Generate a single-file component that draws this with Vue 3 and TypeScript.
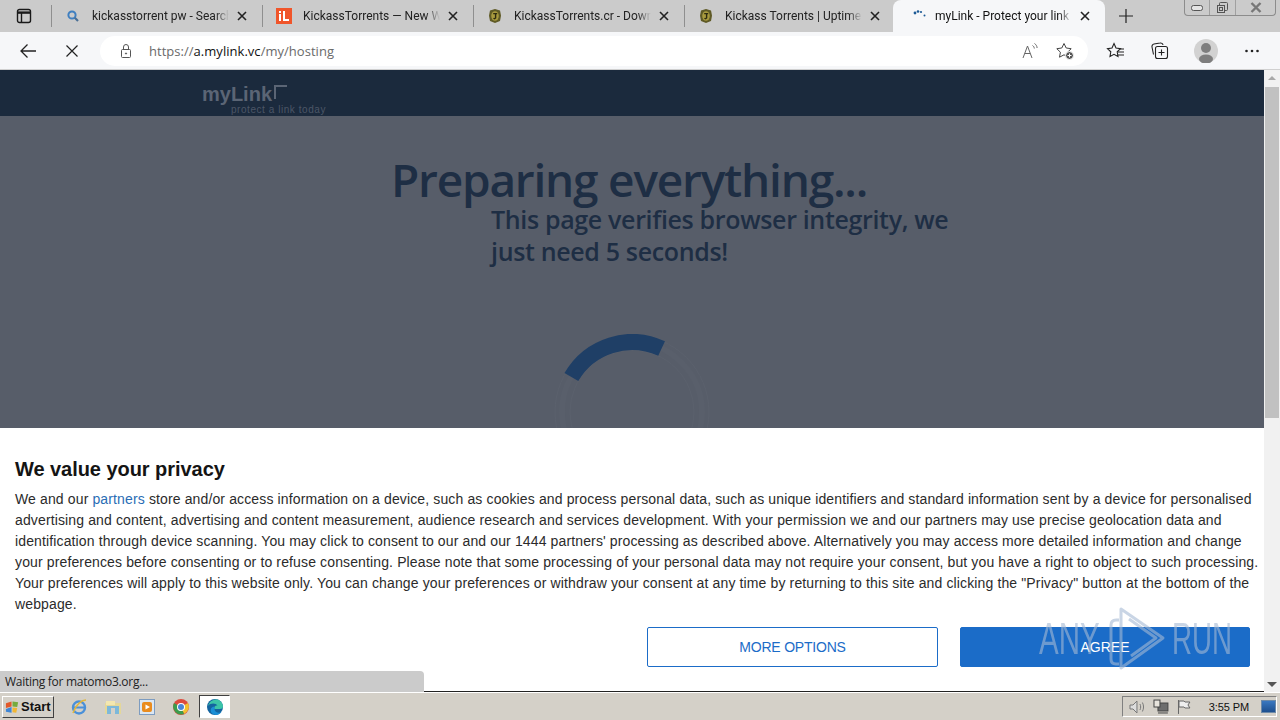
<script setup lang="ts">
interface Tab {
  title: string
  icon: string
}

const tabs: Tab[] = [
  { title: 'kickasstorrent pw - Search', icon: 'search' },
  { title: 'KickassTorrents — New Website', icon: 'il' },
  { title: 'KickassTorrents.cr - Download', icon: 'ka' },
  { title: 'Kickass Torrents | Uptime Status', icon: 'ka' },
]
</script>

<template>
  <div class="screen">
    <div class="tabstrip">
      <div class="tab-btn">
        <svg width="16" height="16" viewBox="0 0 16 16" fill="none" stroke="#1a1a1a" stroke-width="1.4">
          <rect x="1.5" y="1.5" width="13" height="13" rx="2" />
          <path d="M1.5 4.6h13" stroke-width="2.4" />
          <path d="M5.5 5v9" />
        </svg>
      </div>
      <div v-for="t in tabs" :key="t.title" class="tab">
        <span class="fav">
          <svg v-if="t.icon === 'search'" width="14" height="14" viewBox="0 0 14 14" fill="none">
            <circle cx="6" cy="6" r="3.6" stroke="#3f7fc0" stroke-width="2" />
            <path d="M8.8 8.8 12 12" stroke="#4a6f95" stroke-width="2.2" />
          </svg>
          <svg v-else-if="t.icon === 'il'" width="16" height="16" viewBox="0 0 16 16">
            <rect width="16" height="16" fill="#f0552a" />
            <rect x="3" y="6" width="2" height="7" fill="#fff" />
            <rect x="3" y="3" width="2" height="2" fill="#fff" />
            <path d="M7 3h2v8h4v2H7z" fill="#fff" />
          </svg>
          <svg v-else width="16" height="16" viewBox="0 0 16 16">
            <path d="M3 2.5 8 1l5 1.5 1 5-1 5.5-5 2-5-2-1-5.5z" fill="#5f5a26" />
            <ellipse cx="8" cy="8" rx="3.8" ry="4.8" fill="#a89a3e" />
            <path d="M6.2 5h4v1.2H9.3v4L7.6 11.5 6 10.5l1-.8.9.4V6.200H6.200z" fill="#2e2b10" />
          </svg>
        </span>
        <span class="tab-title">{{ t.title }}</span>
        <svg class="tab-x" width="10" height="10" viewBox="0 0 10 10" stroke="#222" stroke-width="1.6">
          <path d="M1 1l8 8M9 1l-8 8" />
        </svg>
      </div>
      <div class="tab active">
        <span class="fav">
          <svg width="16" height="16" viewBox="0 0 16 16" fill="#1c5a96">
            <circle cx="3" cy="5" r="1.4" />
            <circle cx="6" cy="3.500" r="1.300" />
            <circle cx="9" cy="4" r="1.100" />
            <circle cx="12.500" cy="7.500" r="1" />
          </svg>
        </span>
        <span class="tab-title">myLink - Protect your link</span>
        <svg class="tab-x" width="10" height="10" viewBox="0 0 10 10" stroke="#222" stroke-width="1.6">
          <path d="M1 1l8 8M9 1l-8 8" />
        </svg>
      </div>
      <div class="new-tab">
        <svg width="14" height="14" viewBox="0 0 14 14" stroke="#222" stroke-width="1.2">
          <path d="M7 0v14M0 7h14" />
        </svg>
      </div>
      <div class="win-btns">
        <span class="win-btn">
          <svg width="12" height="6" viewBox="0 0 12 6" fill="#e4e4e4" stroke="#555"><rect x=".5" y=".5" width="11" height="5" rx="2" /></svg>
        </span>
        <span class="win-btn mid">
          <svg width="13" height="13" viewBox="0 0 13 13" fill="none" stroke="#555"><rect x="1.500" y="4.500" width="7" height="7" /><path d="M3.500 4.500V2.500a1 1 0 0 1 1-1h6a1 1 0 0 1 1 1v6a1 1 0 0 1-1 1H8.500" /><rect x="3.500" y="6.500" width="3" height="3" /></svg>
        </span>
        <span class="win-btn wide">
          <svg width="12" height="11" viewBox="0 0 12 11" fill="none" stroke="#777" stroke-width="2.400"><path d="M1.500 1l9 9M10.500 1l-9 9" /></svg>
        </span>
      </div>
    </div>

    <div class="toolbar">
      <span class="tool-btn">
        <svg width="18" height="16" viewBox="0 0 18 16" fill="none" stroke="#222" stroke-width="1.3"><path d="M17 8H2M8.500 1.500 2 8l6.500 6.500" /></svg>
      </span>
      <span class="tool-btn">
        <svg width="14" height="14" viewBox="0 0 14 14" fill="none" stroke="#222" stroke-width="1.2"><path d="M1.500 1.500l11 11M12.500 1.500l-11 11" /></svg>
      </span>
      <div class="address">
        <svg class="lock" width="14" height="16" viewBox="0 0 14 16" fill="none" stroke="#555">
          <rect x="2.500" y="6.500" width="9" height="8" rx="1" />
          <path d="M4.500 6.500V4a2.500 2.500 0 0 1 5 0v2.500" />
          <circle cx="7" cy="10.500" r=".6" fill="#555" />
        </svg>
        <span class="url"><span class="dim">https://</span>a.mylink.vc<span class="dim">/my/hosting</span></span>
        <span class="addr-icons">
          <svg width="18" height="18" viewBox="0 0 18 18" fill="none" stroke="#666">
            <path d="M2 16 6.500 4 11 16M3.800 11.500h5.400" />
            <path d="M11.500 3.500c1 .6 1.700 1.600 1.800 3M13.500 1.500c1.500 1 2.500 2.500 2.600 4.500" />
          </svg>
          <svg width="20" height="20" viewBox="0 0 20 20" fill="none" stroke="#444">
            <path d="M9 2.500 11.200 7l5 .7-3.600 3.500.9 5-4.500-2.400-4.500 2.400.9-5L1.800 7.700l5-.7z" />
            <circle cx="14.500" cy="14.500" r="4" fill="#555" stroke="#fff" />
            <path d="M14.500 12.500v4M12.500 14.500h4" stroke="#fff" />
          </svg>
        </span>
      </div>
      <div class="tools">
        <svg width="20" height="18" viewBox="0 0 20 18" fill="none" stroke="#222" stroke-width="1.1">
          <path d="M8 1.500 10 6l4.500.6-3.300 3.200.8 4.700L8 12.300l-4 2.200.8-4.700L1.500 6.600 6 6z" />
          <path d="M13 7h5M12 10h6M12 13h6" />
        </svg>
        <svg width="20" height="20" viewBox="0 0 20 20" fill="none" stroke="#222" stroke-width="1.1">
          <rect x="5.500" y="5.500" width="12" height="12" rx="2" />
          <path d="M11.500 8.500v6M8.500 11.500h6" />
          <path d="M3.500 13.500 2 6a2.500 2.500 0 0 1 2-3l6-1a2.500 2.500 0 0 1 3 2" />
        </svg>
        <svg class="avatar" width="24" height="24" viewBox="0 0 24 24">
          <circle cx="12" cy="12" r="12" fill="#d2d2d2" />
          <circle cx="12" cy="9" r="5" fill="#7e7e7e" />
          <ellipse cx="12" cy="20" rx="7" ry="4.500" fill="#7e7e7e" />
        </svg>
        <svg width="16" height="4" viewBox="0 0 16 4" fill="#222">
          <circle cx="2.500" cy="2" r="1.300" />
          <circle cx="8" cy="2" r="1.300" />
          <circle cx="13.500" cy="2" r="1.300" />
        </svg>
      </div>
    </div>

    <div class="viewport">
      <div class="page">
        <div class="site-head">
          <div class="logo">
            <span class="logo-name">myLink<i class="logo-mark"></i></span>
            <span class="logo-sub">protect a link today</span>
          </div>
        </div>
        <div class="hero">
          <h1>Preparing everything...</h1>
          <p>This page verifies browser integrity, we just need 5 seconds!</p>
          <svg class="spinner" width="156" height="156" viewBox="0 0 156 156" fill="none">
            <circle cx="78" cy="78" r="62" stroke="#5b616d" />
            <circle cx="78" cy="78" r="70" stroke="#595f6b" stroke-width="6" />
            <circle cx="78" cy="78" r="77" stroke="#5b616d" />
            <path d="M17.400 43A70 70 0 0 1 107.600 14.600" stroke="#1f3f66" stroke-width="16" />
          </svg>
        </div>

        <div class="consent">
          <h2>We value your privacy</h2>
          <p>
            We and our <a>partners</a> store and/or access information on a device, such as cookies and process personal data, such as unique identifiers and standard information sent by a device for personalised advertising and content, advertising and content measurement, audience research and services development. With your permission we and our partners may use precise geolocation data and identification through device scanning. You may click to consent to our and our 1444 partners' processing as described above. Alternatively you may access more detailed information and change your preferences before consenting or to refuse consenting. Please note that some processing of your personal data may not require your consent, but you have a right to object to such processing. Your preferences will apply to this website only. You can change your preferences or withdraw your consent at any time by returning to this site and clicking the "Privacy" button at the bottom of the webpage.
          </p>
          <div class="consent-btns">
            <button class="more">MORE OPTIONS</button>
            <button class="agree">AGREE</button>
          </div>
        </div>
      </div>

      <div class="scrollbar">
        <svg width="16" height="16" viewBox="0 0 16 16"><path d="M4 10l4-4 4 4z" fill="#a8a8a8" /></svg>
        <div class="track"><div class="thumb"></div></div>
        <svg width="16" height="16" viewBox="0 0 16 16"><path d="M3 6h10l-5 5z" fill="#555" /></svg>
      </div>

      <div class="status">Waiting for matomo3.org...</div>

      <div class="watermark">
        <span class="wm-any">ANY</span>
        <svg width="58" height="66" viewBox="0 0 58 66" fill="none" stroke="currentColor" stroke-width="3" stroke-linejoin="round">
          <path d="M11 14H8q-5 0-5 5v34q0 5 5 5h3" />
          <path d="M13 3 55 32 13 62z" />
          <path d="M21 13 48 32 23 50" />
        </svg>
        <span class="wm-run">RUN</span>
      </div>
    </div>

    <div class="taskbar">
      <button class="start">
        <svg width="15" height="14" viewBox="0 0 16 14">
          <path d="M1 3 7 1v5.500L1 8z" fill="#e2592b" />
          <path d="M8 1l6 1-1 5-5-.5z" fill="#76ab3d" />
          <path d="M1 9l6-2v6l-6-1z" fill="#3f86d6" />
          <path d="M8 7.500l5 .5-1 5-4-.5z" fill="#f2b632" />
        </svg>
        Start
      </button>
      <div class="quick">
        <svg width="18" height="18" viewBox="0 0 18 18" fill="none">
          <circle cx="9" cy="9.500" r="6" stroke="#4a90d9" stroke-width="2.400" />
          <path d="M4 9.500h10" stroke="#4a90d9" stroke-width="2" />
          <path d="M3 15C6 6 12 2 16 2" stroke="#e2b63c" stroke-width="1.500" />
        </svg>
        <svg width="18" height="18" viewBox="0 0 18 18">
          <rect x="1" y="5" width="16" height="11" fill="#e4d79a" />
          <rect x="2" y="3" width="9" height="4" fill="#f3e7b0" />
          <rect x="3" y="8" width="12" height="8" fill="#7db8da" />
          <rect x="7" y="10" width="4" height="6" fill="#d5d0c8" />
        </svg>
        <svg width="18" height="18" viewBox="0 0 18 18">
          <rect x="1.500" y="1.500" width="15" height="15" fill="#dbe7f3" stroke="#7d9cc0" />
          <rect x="4" y="4" width="10" height="10" rx="2" fill="#e98c1f" />
          <path d="M7.500 6.500 12 9l-4.500 2.500z" fill="#fff" />
        </svg>
        <svg width="18" height="18" viewBox="0 0 18 18">
          <circle cx="9" cy="9" r="8" fill="#dd4b3e" />
          <path d="M9 9 16 5a8 8 0 0 1-4 11z" fill="#f2c230" />
          <path d="M9 9 12 16A8 8 0 0 1 2 5z" fill="#3c9c4d" />
          <circle cx="9" cy="9" r="4" fill="#fff" />
          <circle cx="9" cy="9" r="3" fill="#4a86d8" />
        </svg>
        <span class="running">
          <svg width="18" height="18" viewBox="0 0 18 18">
            <circle cx="9" cy="9" r="8" fill="#14649f" />
            <path d="M2 8C3 3 8 1 11 1.500c3 .5 6 3.500 6 7 0 1.500-1 2.500-3 2.500H8.500c-1-2 1-4 3-3.500C10 5 4.500 4.500 2 8z" fill="#3cc4a8" />
            <path d="M8.500 11c0 3 4 5 7 3-2 2.500-5 3.500-7.500 2.500C5 15.500 4 13 5 10.500 6 9 7.500 8.500 8.500 9z" fill="#1b8fd6" />
          </svg>
        </span>
      </div>
      <div class="tray">
        <svg width="18" height="16" viewBox="0 0 18 16" fill="none" stroke="#777">
          <path d="M2 6h3l4-4v12l-4-4H2z" fill="#ddd" />
          <path d="M12 5c1 2 1 4 0 6M14.500 3.500c1.500 3 1.500 6 0 9" />
        </svg>
        <svg width="18" height="16" viewBox="0 0 18 16">
          <rect x="6" y="4" width="10" height="8" fill="#6d6d6d" stroke="#444" />
          <rect x="2" y="1" width="6" height="7" fill="#e8e4dc" stroke="#444" />
          <path d="M6 14h10" stroke="#444" />
        </svg>
        <svg width="16" height="16" viewBox="0 0 16 16" fill="none" stroke="#666">
          <path d="M2.500 1v14" />
          <path d="M3 2h5l1 1h5l-2 3 2 3H9L8 8H3z" fill="#eee" />
        </svg>
        <span class="clock">3:55 PM</span>
        <span class="desk"></span>
      </div>
    </div>
  </div>
</template>

<style>
html, body { margin: 0; padding: 0; overflow: hidden; }
</style>

<style scoped>
.screen { width: 1280px; height: 720px; display: flex; flex-direction: column; overflow: hidden; font-family: "Open Sans", "Noto Sans", sans-serif; background: #fff; }

.tabstrip { height: 32px; flex: none; display: flex; align-items: stretch; background: #cbcbcb; position: relative; }
.tab-btn { width: 51px; display: flex; align-items: center; justify-content: center; flex: none; margin-right: 0; padding-right: 3px; box-sizing: border-box; }
.tab { width: 211px; flex: none; display: flex; align-items: center; gap: 8px; padding: 0 15px 0 13px; box-sizing: border-box; border-left: 1px solid #8f8f8f; height: 22px; margin-top: 5px; font-family: Roboto, sans-serif; font-size: 12px; color: #222; }
.fav { width: 16px; height: 16px; flex: none; display: flex; align-items: center; justify-content: center; margin-right: 3px; }
.tab-title { flex: 1; overflow: hidden; white-space: nowrap; -webkit-mask-image: linear-gradient(90deg, #000 90%, transparent); mask-image: linear-gradient(90deg, #000 90%, transparent); }
.tab-x { flex: none; }
.tab.active { background: #f6f7f9; height: 32px; margin: 0 0 0 -2px; border: none; border-radius: 8px 8px 0 0; padding: 0 15px 0 19px; width: 212px; color: #111; }
.tab.active .fav { margin-right: -1px; }
.new-tab { width: 42px; display: flex; align-items: center; justify-content: center; }
.win-btns { margin-left: auto; margin-right: 4px; width: 92px; height: 16px; display: flex; align-items: stretch; border: 1px solid #8c8c8c; border-top: none; border-radius: 0 0 4px 4px; box-sizing: border-box; }
.win-btn { width: 24px; display: flex; justify-content: center; align-items: center; }
.win-btn.mid { width: 25px; border: solid #a0a0a0; border-width: 0 1px; }
.win-btn.wide { flex: 1; }

.toolbar { height: 38px; flex: none; display: flex; align-items: center; background: #f6f7f9; padding: 0 0 0 9px; box-sizing: border-box; border-bottom: 1px solid #d0d0d0; }
.tool-btn { width: 38px; height: 30px; display: flex; align-items: center; justify-content: center; flex: none; margin-right: 6px; }
.address { width: 988px; height: 30px; margin-left: 3px; background: #fff; border-radius: 15px; display: flex; align-items: center; padding: 0 13px 0 19px; box-sizing: border-box; flex: none; }
.lock { flex: none; margin-right: 16px; }
.url { font-size: 13px; color: #111; flex: 1; letter-spacing: .03px; }
.dim { color: #6a6a6a; }
.addr-icons { display: flex; gap: 16px; align-items: center; }
.tools { display: flex; align-items: center; gap: 24px; margin-left: 18px; }
.avatar { margin-right: 2px; }

.viewport { flex: 1; min-height: 0; display: flex; position: relative; }
.page { flex: 1; position: relative; background: #575d69; overflow: hidden; }
.site-head { height: 46px; background: #1b2a3d; }
.logo { margin-left: 202px; display: flex; flex-direction: column; padding-top: 13px; }
.logo-name { font-family: "Liberation Sans", sans-serif; font-weight: 700; font-size: 20px; line-height: 22px; color: #5b6575; display: flex; align-items: center; }
.logo-mark { display: inline-block; width: 11px; height: 12px; border-left: 2px solid #5b6575; border-top: 2px solid #5b6575; margin: -4px 0 0 2px; }
.logo-sub { font-family: "Liberation Sans", sans-serif; font-size: 10px; letter-spacing: .55px; line-height: 10px; color: #4c5667; margin-left: 29px; margin-top: 0; white-space: nowrap; }

.hero { display: grid; justify-content: start; padding-left: 391px; }
.hero h1 { margin: 39px 0 0; font-size: 46px; line-height: 48px; font-weight: 600; color: #1e2e44; letter-spacing: -1.22px; white-space: nowrap; }
.hero p { margin: 0 0 0 100px; width: 470px; font-size: 25px; line-height: 32px; font-weight: 600; color: #1e2e44; letter-spacing: -.34px; }
.spinner { margin: 67px 0 0 163px; }

.consent { position: absolute; left: 0; right: 0; top: 358px; bottom: 0; background: #fff; padding: 30px 0 0 15px; box-sizing: border-box; font-family: "Liberation Sans", sans-serif; border-bottom: 1px solid #222; }
.consent h2 { margin: 0; font-size: 20px; line-height: 23px; font-weight: 700; color: #141414; letter-spacing: -.05px; }
.consent p { margin: 8px 0 0; font-size: 14px; line-height: 21px; color: #2b2b2b; width: 1246px; letter-spacing: .13px; }
.consent a { color: #2a6db5; }
.consent-btns { display: flex; justify-content: flex-end; gap: 22px; margin-top: 12px; padding-right: 14px; }
.consent button { width: 291px; height: 40px; font-family: inherit; font-size: 14px; border-radius: 2px; box-sizing: border-box; }
.consent button.agree { width: 290px; }
.more { background: #fff; color: #1b6cc8; border: 1px solid #1b6cc8; letter-spacing: -.2px; }
.agree { background: #1b6cc8; color: #fff; border: 1px solid #1b6cc8; }

.scrollbar { width: 16px; flex: none; background: #f1f1f1; display: flex; flex-direction: column; }
.track { flex: 1; }
.thumb { height: 331px; background: #c1c1c1; margin: 1px 1px 0; }

.status { position: absolute; left: 0; bottom: 0; width: 424px; height: 21px; background: #cbcbcb; border-radius: 0 4px 0 0; font-size: 12px; line-height: 21px; padding-left: 5px; box-sizing: border-box; color: #222; letter-spacing: -.28px; }

.watermark { position: absolute; left: 1039px; top: 536px; display: flex; align-items: center; height: 66px; pointer-events: none; font-family: "Liberation Sans", sans-serif; font-size: 44px; line-height: 66px; color: rgba(165, 185, 212, .6); }
.wm-any { width: 61px; margin-right: 8px; transform: scaleX(.67); transform-origin: left; }
.wm-run { width: 60px; margin-left: 6px; transform: scaleX(.63); transform-origin: left; }

.taskbar { height: 28px; flex: none; background: #d4d0c8; border-top: 1px solid #fff; box-sizing: border-box; display: flex; align-items: center; padding-left: 2px; }
.start { width: 52px; height: 22px; padding: 0 0 0 2px; display: flex; align-items: center; gap: 1px; font-family: "Liberation Sans", sans-serif; font-size: 13px; font-weight: 700; color: #111; background: #d4d0c8; border: 1px solid; border-color: #fff #404040 #404040 #fff; box-sizing: border-box; }
.quick { display: flex; align-items: center; gap: 16px; margin-left: 16px; }
.running { width: 31px; height: 23px; display: flex; align-items: center; justify-content: center; background: #fff; border: 1px solid; border-color: #404040 #fff #fff #404040; box-sizing: border-box; margin-left: -7px; }
.tray { margin-left: auto; margin-right: 3px; width: 155px; height: 21px; display: flex; align-items: center; gap: 6px; padding-left: 5px; box-sizing: border-box; border: 1px solid; border-color: #808080 #fff #fff #808080; }
.clock { font-family: "Liberation Sans", sans-serif; font-size: 11px; color: #111; margin-left: 11px; white-space: nowrap; letter-spacing: -.1px; }
.desk { width: 15px; height: 13px; background: linear-gradient(#3a78c0, #1d4f8f); border: 1px solid #6d8aa8; margin-left: 6px; flex: none; box-sizing: border-box; }
</style>
